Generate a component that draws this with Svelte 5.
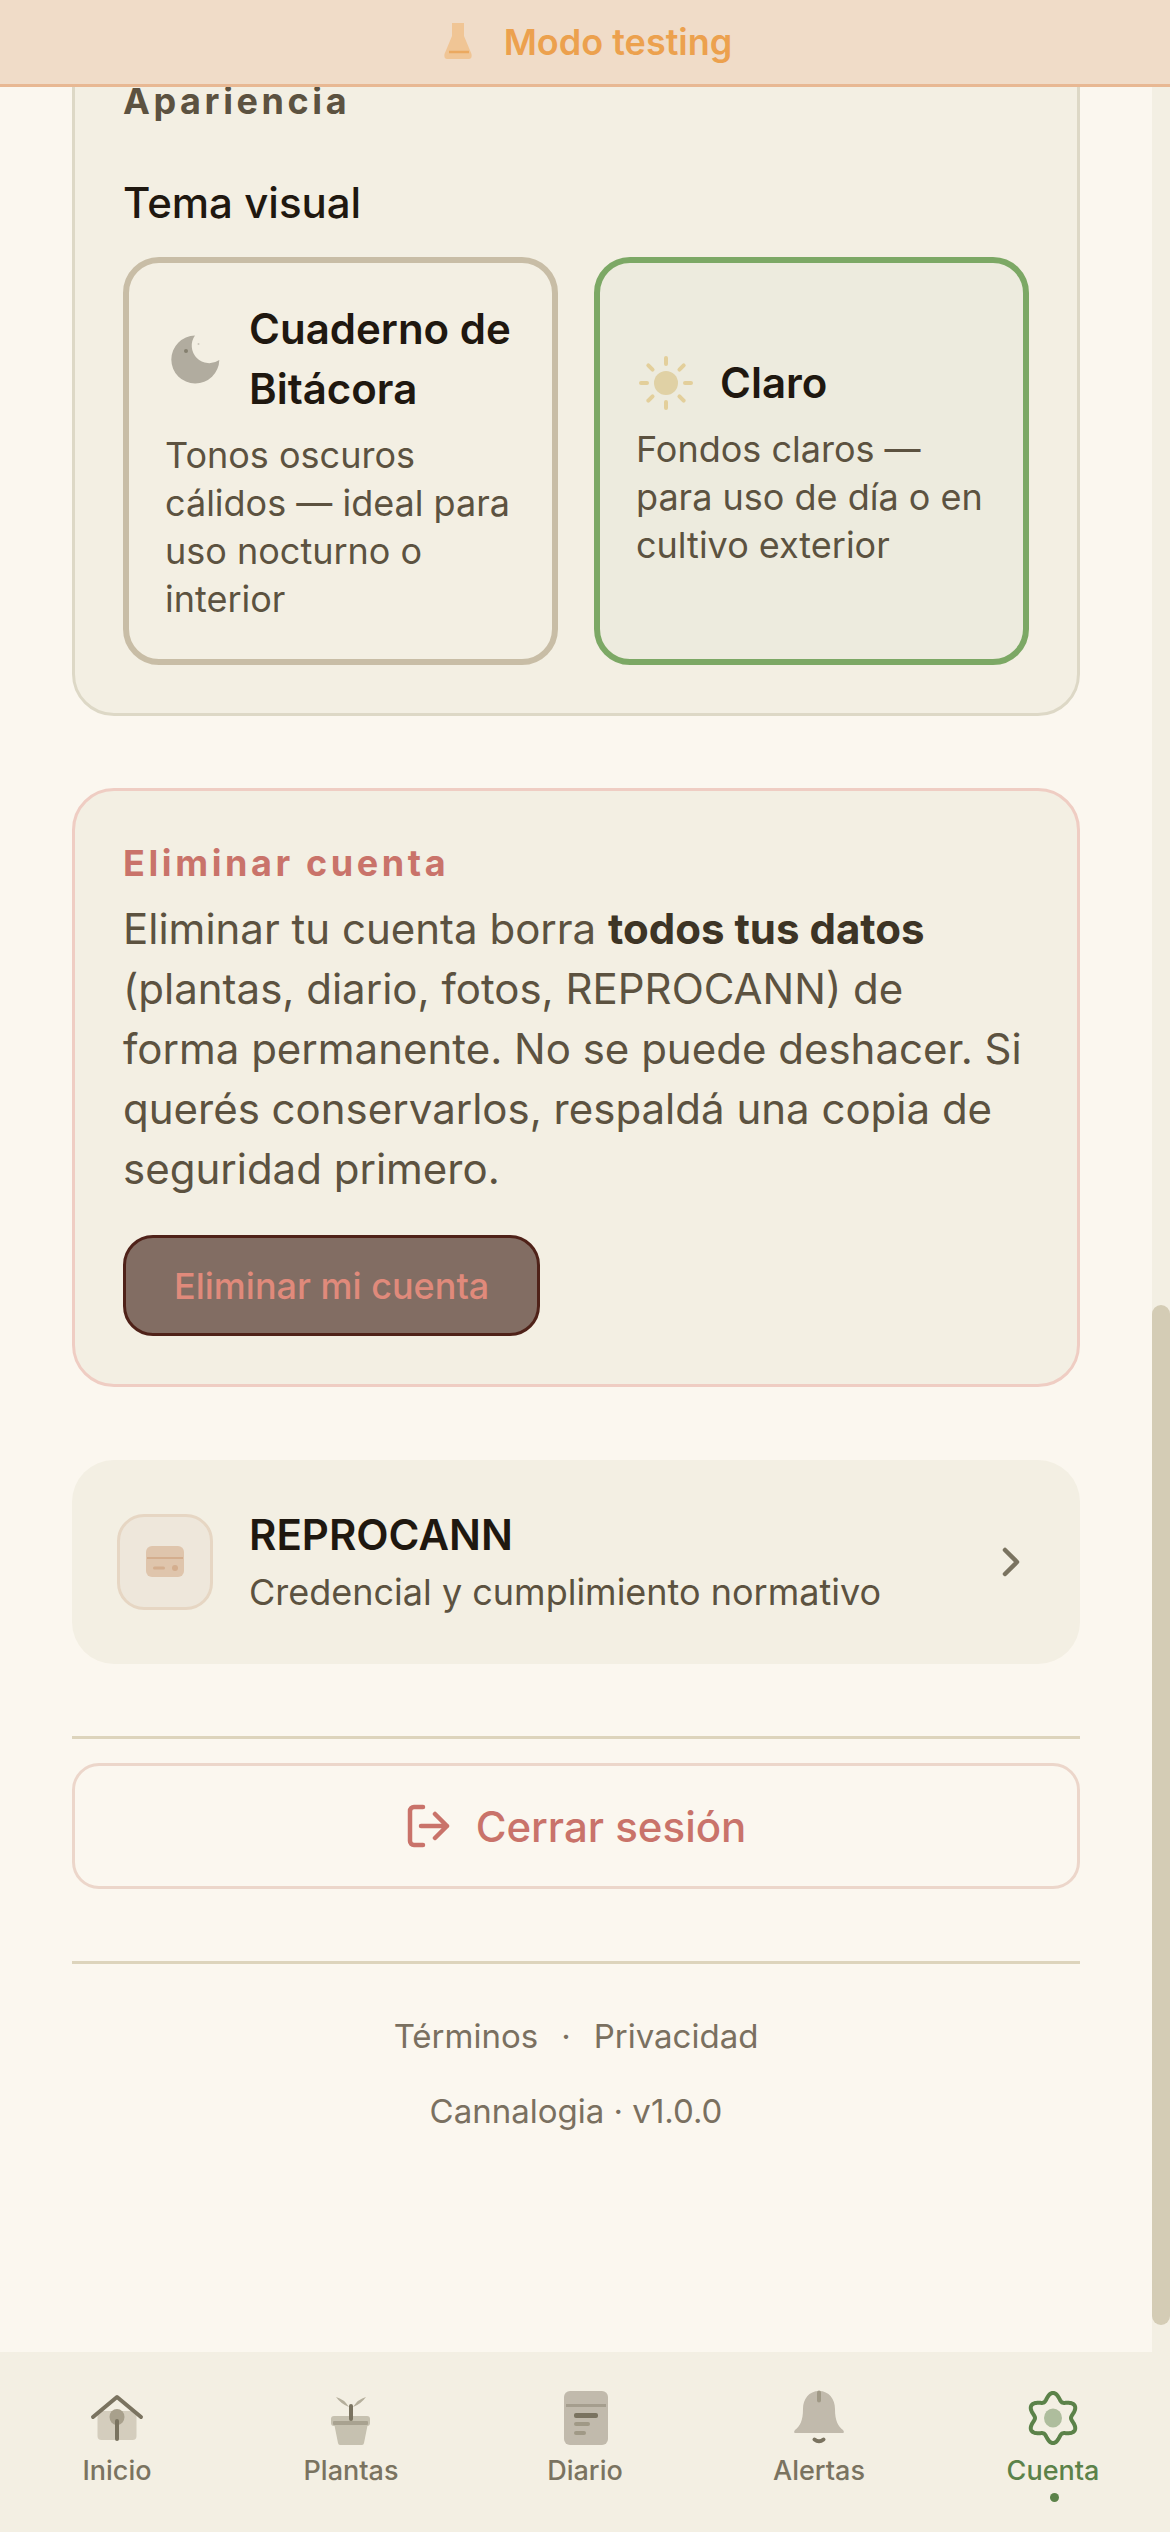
<script>
  const themes = [
    { id: 'dark', title: 'Cuaderno de Bitácora', desc: 'Tonos oscuros cálidos — ideal para uso nocturno o interior' },
    { id: 'light', title: 'Claro', desc: 'Fondos claros — para uso de día o en cultivo exterior', active: true }
  ];

  const sunRays = [0, 45, 90, 135, 180, 225, 270, 315];

  // wavy six-lobed outline for the account tab
  function gearPath(cx, cy) {
    let d = '';
    for (let i = 0; i <= 180; i++) {
      const a = (i / 180) * Math.PI * 2;
      const r = 21.5 + 3.5 * Math.cos(6 * a);
      const x = cx + r * Math.sin(a);
      const y = cy - r * Math.cos(a);
      d += `${i ? 'L' : 'M'}${x.toFixed(2)} ${y.toFixed(2)}`;
    }
    return d + 'Z';
  }

  const tabs = ['Inicio', 'Plantas', 'Diario', 'Alertas', 'Cuenta'];
</script>

<div class="app">
  <header class="test-bar">
    <svg class="flask" width="42" height="42" viewBox="-2 0 42 42">
      <path d="M10 2h12v13l7.500 18q1 5-3 5H5.500q-4 0-3-5L10 15z" fill="#f0c595" transform="translate(2 0)" />
      <path d="M9 31h20" stroke="#eba960" stroke-width="2.500" />
    </svg>
    <span>Modo testing</span>
  </header>

  <main class="scroller">
    <div class="content">
      <section class="card">
        <h2 class="eyebrow">Apariencia</h2>
        <p class="label">Tema visual</p>
        <div class="themes">
          {#each themes as t}
            <button class="theme" class:active={t.active}>
              <div class="theme-head">
                {#if t.id === 'dark'}
                  <svg width="60" height="60" viewBox="0 0 60 60">
                    <path d="M54.300 31A24 24 0 1 1 30 6.500 A17.500 17.500 0 0 0 54.300 31Z" fill="#b1ac9f" />
                    <circle cx="21" cy="22" r="2" fill="#85806f" />
                    <circle cx="33.500" cy="15" r="1" fill="#cdc8bb" />
                  </svg>
                {:else}
                  <svg width="60" height="60" viewBox="0 0 60 60">
                    <circle cx="30" cy="30" r="12" fill="#e0d1a5" />
                    {#each sunRays as deg}
                      <path d="M30 5v6" transform="rotate({deg} 30 30)" stroke="#e3cf9b" stroke-width="4" stroke-linecap="round" />
                    {/each}
                  </svg>
                {/if}
                <span class="theme-title">{t.title}</span>
              </div>
              <p class="theme-desc">{t.desc}</p>
            </button>
          {/each}
        </div>
      </section>

      <section class="card danger">
        <h2 class="eyebrow red">Eliminar cuenta</h2>
        <p class="warning">
          Eliminar tu cuenta borra <strong>todos tus datos</strong> (plantas, diario, fotos, REPROCANN) de forma permanente. No se puede deshacer. Si querés conservarlos, respaldá una copia de seguridad primero.
        </p>
        <button class="delete">Eliminar mi cuenta</button>
      </section>

      <button class="link-row">
        <span class="link-icon">
          <svg width="48" height="48" viewBox="0 0 48 48">
            <rect x="5" y="8" width="38" height="31" rx="6" fill="#dfc5ac" />
            <rect x="6" y="19" width="36" height="2" fill="#d4ae8e" />
            <path d="M13.500 30h9" stroke="#d4ae8e" stroke-width="3" stroke-linecap="round" />
            <circle cx="34" cy="30" r="3" fill="#d4ae8e" />
          </svg>
        </span>
        <span class="link-text">
          <span class="link-title">REPROCANN</span>
          <span class="link-sub">Credencial y cumplimiento normativo</span>
        </span>
        <svg class="chev" width="36" height="36" viewBox="0 0 36 36">
          <path d="M6 6l12 12-12 12" fill="none" stroke="#7a7360" stroke-width="4.500" stroke-linecap="round" stroke-linejoin="round" />
        </svg>
      </button>

      <div class="logout-block">
        <button class="logout">
          <svg width="44" height="44" viewBox="0 0 44 44">
            <path d="M17 3H8a4 4 0 0 0-4 4v30a4 4 0 0 0 4 4h9M15 22h26M29 10l12 12-12 12" fill="none" stroke="#c9736a" stroke-width="4.500" stroke-linecap="round" stroke-linejoin="round" />
          </svg>
          <span>Cerrar sesión</span>
        </button>
      </div>

      <footer class="legal">
        <div class="legal-links"><span>Términos</span><span>·</span><span>Privacidad</span></div>
        <div>Cannalogia · v1.0.0</div>
      </footer>
    </div>

    <div class="scrollbar"><div class="thumb"></div></div>
  </main>

  <nav class="tabs">
    {#each tabs as tab, i}
      <div class="tab" class:current={i === 4}>
        <svg width="66" height="66" viewBox="0 0 66 66">
          {#if i === 0}
            <rect x="13.500" y="26" width="39" height="29" rx="4" fill="#d4cdbd" />
            <path d="M9 32 33 12l24 20" fill="none" stroke="#7a7360" stroke-width="4" stroke-linecap="round" stroke-linejoin="round" />
            <ellipse cx="33" cy="32" rx="7.500" ry="8" fill="#a8a08c" />
            <path d="M33 36v18" stroke="#7a7360" stroke-width="4" stroke-linecap="round" />
          {:else if i === 1}
            <path d="M16 38h34l-4 20q-.3 2-2 2H22q-1.700 0-2-2z" fill="#c6c1b0" />
            <rect x="13" y="31" width="39" height="10" rx="3" fill="#c6c1b0" />
            <rect x="15" y="36" width="35" height="4" rx="1" fill="#a8a290" />
            <path d="M31 22Q26 14 18 12q5 7 13 10zM35 22q5-8 13-10-5 7-13 10z" fill="#b5af9c" />
            <path d="M33 21v13" stroke="#7a7360" stroke-width="4" stroke-linecap="round" />
          {:else if i === 2}
            <rect x="12" y="6" width="44" height="54" rx="6" fill="#c1baac" />
            <rect x="14" y="19" width="40" height="3" fill="#a59e8e" />
            <rect x="22" y="28" width="24" height="5" rx="2" fill="#7a7360" />
            <rect x="22" y="37" width="16" height="4" rx="2" fill="#a09986" />
            <rect x="22" y="46" width="12" height="4" rx="2" fill="#a09986" />
          {:else if i === 3}
            <path d="M33 6c-10 0-16 8-16 18 0 12-3 17-8 21q-1.500 1.500-.5 3h49q1-1.500-.5-3c-5-4-8-9-8-21C49 14 43 6 33 6z" fill="#c1baac" />
            <path d="M33 7.500v8" stroke="#a09986" stroke-width="4" stroke-linecap="round" />
            <path d="M28.500 54.500q4.500 3.500 9 0" fill="none" stroke="#7a7360" stroke-width="4" stroke-linecap="round" />
          {:else}
            <path d={gearPath(33, 33)} fill="none" stroke="#5b8249" stroke-width="4" />
            <ellipse cx="33" cy="33" rx="9" ry="9.500" fill="#aebd9d" />
          {/if}
        </svg>
        <span class="tab-label">{tab}</span>
        {#if i === 4}<span class="dot"></span>{/if}
      </div>
    {/each}
  </nav>
</div>

<style>
  :global(body) {
    background: #fbf7ef;
    font-family: Inter, "Noto Sans", sans-serif;
  }

  .app {
    width: 1170px;
    height: 2532px;
    display: flex;
    flex-direction: column;
    overflow: hidden;
  }

  button {
    font: inherit;
    text-align: left;
    cursor: pointer;
  }

  p, h2 {
    margin: 0;
  }

  .test-bar {
    flex: none;
    height: 84px;
    border-bottom: 3px solid #e8b893;
    background: #f0dcc8;
    display: flex;
    align-items: center;
    justify-content: center;
    gap: 24px;
    color: #eca14e;
    font-size: 36px;
    font-weight: 600;
    position: relative;
    z-index: 2;
  }

  .scroller {
    flex: 1;
    min-height: 0;
    position: relative;
    overflow: hidden;
  }

  /* the page is scrolled: the first card starts above the fold */
  .content {
    width: 1008px;
    margin: -61px 0 0 72px;
    display: flex;
    flex-direction: column;
  }

  .card {
    background: #f3efe3;
    border: 3px solid #ddd8c6;
    border-radius: 42px;
    padding: 48px;
    margin-bottom: 72px;
  }

  .eyebrow {
    font-size: 36px;
    line-height: 48px;
    font-weight: 700;
    letter-spacing: 3.600px;
    color: #5c5240;
  }

  .red {
    color: #c9736a;
  }

  .label {
    margin-top: 48px;
    font-size: 42px;
    line-height: 60px;
    font-weight: 500;
    color: #1f1810;
  }

  .themes {
    margin-top: 24px;
    display: grid;
    grid-template-columns: 1fr 1fr;
    gap: 36px;
  }

  .theme {
    background: transparent;
    border: 6px solid #c8bda6;
    border-radius: 36px;
    padding: 36px;
    display: flex;
    flex-direction: column;
    justify-content: center;
  }

  .theme.active {
    border-color: #7ca865;
    background: #edebde;
  }

  .theme-head {
    display: flex;
    align-items: center;
    gap: 24px;
  }

  .theme-head svg {
    flex: none;
  }

  .theme-title {
    font-size: 42px;
    line-height: 60px;
    font-weight: 600;
    color: #1f1810;
  }

  .theme-desc {
    margin-top: 12px;
    font-size: 36px;
    line-height: 48px;
    color: #5c5240;
  }

  .danger {
    border-color: #efcdc3;
    margin-bottom: 73px;
  }

  .warning {
    margin-top: 12px;
    font-size: 42px;
    line-height: 60px;
    color: #5c5240;
  }

  .warning strong {
    font-weight: 700;
    color: #3d3425;
  }

  .delete {
    margin-top: 36px;
    height: 101px;
    padding: 0 48px;
    background: #826d63;
    border: 3px solid #4f2219;
    border-radius: 30px;
    color: #e08a7b;
    font-size: 36px;
    font-weight: 500;
  }

  .link-row {
    height: 204px;
    margin-bottom: 72px;
    padding: 0 45px;
    background: #f3efe3;
    border: none;
    border-radius: 42px;
    display: flex;
    align-items: center;
    gap: 36px;
  }

  .link-icon {
    flex: none;
    width: 96px;
    height: 96px;
    box-sizing: border-box;
    background: #eee7db;
    border: 3px solid #e6d6c3;
    border-radius: 27px;
    display: flex;
    align-items: center;
    justify-content: center;
  }

  .link-text {
    flex: 1;
    display: flex;
    flex-direction: column;
  }

  .link-title {
    font-size: 42px;
    line-height: 60px;
    font-weight: 600;
    color: #1f1810;
  }

  .link-sub {
    font-size: 36px;
    line-height: 54px;
    color: #5c5240;
  }

  .logout-block {
    border-top: 3px solid #ddd4bc;
    border-bottom: 3px solid #ddd4bc;
    padding: 24px 0 72px;
  }

  .logout {
    width: 100%;
    height: 126px;
    background: transparent;
    border: 3px solid #ecd6ca;
    border-radius: 27px;
    display: flex;
    align-items: center;
    justify-content: center;
    gap: 26px;
    color: #c9736a;
    font-size: 42px;
    font-weight: 500;
  }

  .legal {
    padding-top: 47px;
    display: flex;
    flex-direction: column;
    align-items: center;
    gap: 25px;
    font-size: 33px;
    line-height: 50px;
    color: #7a7060;
  }

  .legal-links {
    display: flex;
    gap: 23px;
  }

  .scrollbar {
    position: absolute;
    top: 0;
    right: 0;
    bottom: 0;
    width: 18px;
    background: #f3efe3;
  }

  .thumb {
    margin-top: 1218px;
    height: 1020px;
    background: #d4ccb5;
    border-radius: 9px;
  }

  .tabs {
    flex: none;
    height: 180px;
    background: #f3efe3;
    display: grid;
    grid-template-columns: repeat(5, 1fr);
  }

  .tab {
    padding-top: 33px;
    display: flex;
    flex-direction: column;
    align-items: center;
    color: #7a7360;
    font-size: 27px;
    font-weight: 500;
  }

  .tab svg {
    display: block;
  }

  .tab-label {
    line-height: 36px;
    margin-top: 2px;
  }

  .current {
    color: #5b8249;
  }

  .dot {
    width: 9px;
    height: 9px;
    margin: 4px 0 0 3px;
    border-radius: 50%;
    background: #5b8249;
  }
</style>
